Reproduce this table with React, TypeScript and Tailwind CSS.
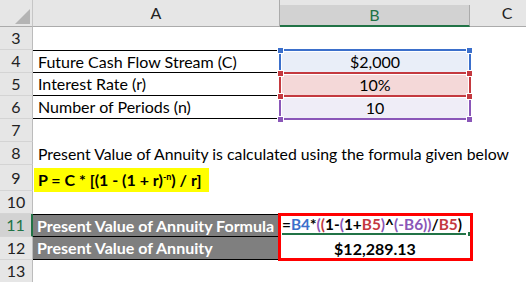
import React from "react";

const hdr = "bg-[#e6e6e6]";

function RowHead({ n, sel }: { n: number; sel?: boolean }) {
  return (
    <div
      className={`w-[33px] shrink-0 flex items-center justify-center border-b border-b-[#d4d4d4] ${
        sel
          ? "bg-[#d2d2d2] border-r-2 border-r-[#217346] text-[#217346]"
          : `${hdr} border-r border-r-[#bcbcbc] text-[#222]`
      }`}
    >
      {n}
    </div>
  );
}

function Handle({ pos, color }: { pos: string; color: string }) {
  return <div className={`absolute w-[7px] h-[7px] border border-white ${pos} ${color}`} />;
}

// coloured range box drawn over a B cell, like Excel's formula reference highlight
function RefBox({
  fill,
  line,
  dot,
  z,
  children,
}: {
  fill: string;
  line: string;
  dot: string;
  z: string;
  children: React.ReactNode;
}) {
  return (
    <div className="relative w-[190px] shrink-0 flex items-center justify-center">
      <div className={`absolute left-[2px] right-[2px] top-[2px] bottom-[1px] ${fill}`} />
      <div className={`absolute -left-[1px] -right-[1px] -top-[1px] -bottom-[1px] border-2 ${line} ${z}`} />
      <div className={`absolute inset-0 ${z}`}>
        <Handle pos="-left-[3px] -top-[3px]" color={dot} />
        <Handle pos="-right-[3px] -top-[3px]" color={dot} />
        <Handle pos="-left-[3px] -bottom-[4px]" color={dot} />
        <Handle pos="-right-[3px] -bottom-[4px]" color={dot} />
      </div>
      <span className="relative">{children}</span>
    </div>
  );
}

const blue = "text-[#3b6fcb]";
const red = "text-[#c4393f]";
const purple = "text-[#8a56b8]";

export default function App() {
  return (
    <div className="w-[526px] h-[282px] overflow-hidden bg-white text-black text-[16px] leading-none font-['Lato','Liberation_Sans',sans-serif]">
      {/* column headers */}
      <div className="flex h-[27px]">
        <div className={`w-[33px] shrink-0 relative ${hdr} border-r border-r-[#c6c6c6] border-b border-b-[#ababab]`}>
          <svg className="absolute left-[15px] top-[9px]" width="15" height="15" viewBox="0 0 15 15">
            <polygon points="15,0 15,15 0,15" fill="#b4b4b4" />
          </svg>
        </div>
        <div className={`w-[247px] shrink-0 flex items-center justify-center ${hdr} border-r border-r-[#ababab] border-b border-b-[#ababab] text-[#222]`}>
          A
        </div>
        <div className={`w-[190px] shrink-0 flex flex-col ${hdr}`}>
          <div className="mt-[5px] flex-1 flex items-center justify-center bg-[#d2d2d2] border-b-2 border-b-[#217346] border-r border-r-[#ababab] text-[#217346]">
            B
          </div>
        </div>
        <div className={`w-[74px] shrink-0 flex items-center justify-center ${hdr} border-b border-b-[#ababab] text-[#222]`}>
          C
        </div>
      </div>

      {/* row 3 */}
      <div className="flex h-[23px]">
        <RowHead n={3} />
      </div>

      {/* row 4 */}
      <div className="flex h-[23px]">
        <RowHead n={4} />
        <div className="w-[247px] shrink-0 flex items-center pl-[5px] border-y border-black">Future Cash Flow Stream (C)</div>
        <RefBox fill="bg-[#e9eef8]" line="border-[#3b6fcb]" dot="bg-[#3b6fcb]" z="z-10">
          $2,000
        </RefBox>
      </div>

      {/* row 5 */}
      <div className="flex h-[23px]">
        <RowHead n={5} />
        <div className="w-[247px] shrink-0 flex items-center pl-[5px] border-b border-black">Interest Rate (r)</div>
        <RefBox fill="bg-[#f4d8d8]" line="border-[#c4393f]" dot="bg-[#c4393f]" z="z-20">
          10%
        </RefBox>
      </div>

      {/* row 6 */}
      <div className="flex h-[23px]">
        <RowHead n={6} />
        <div className="w-[247px] shrink-0 flex items-center pl-[5px] border-b border-black">Number of Periods (n)</div>
        <RefBox fill="bg-[#efedf7]" line="border-[#8a56b8]" dot="bg-[#8a56b8]" z="z-10">
          10
        </RefBox>
      </div>

      {/* row 7 */}
      <div className="flex h-[23px]">
        <RowHead n={7} />
      </div>

      {/* row 8 */}
      <div className="flex h-[23px]">
        <RowHead n={8} />
        <div className="flex items-center pl-[5px] whitespace-nowrap text-[15.8px]">
          Present Value of Annuity is calculated using the formula given below
        </div>
      </div>

      {/* row 9 */}
      <div className="flex h-[26px]">
        <RowHead n={9} />
        <div className="w-[247px] shrink-0 pl-px pt-[3px]">
          <div className="w-[175px] h-[24px] bg-[#ffff00] flex items-center pl-[4px] font-bold whitespace-nowrap">
            <span>
              P = C * [(1 - (1 + r)
              <span className="relative -top-[6px] text-[9px]">-n</span>) / r]
            </span>
          </div>
        </div>
      </div>

      {/* row 10 */}
      <div className="flex h-[23px]">
        <RowHead n={10} />
      </div>

      {/* row 11 */}
      <div className="flex h-[23px]">
        <RowHead n={11} sel />
        <div className="w-[247px] shrink-0 flex items-center pl-[4px] bg-[#7f7f7f] border-y border-black text-white font-bold whitespace-nowrap overflow-hidden">
          Present Value of Annuity Formula
        </div>
        <div className="relative w-[190px] shrink-0 flex items-center pl-[2px] pb-[2px] font-bold whitespace-nowrap text-[15.4px]">
          <div className="absolute -left-[2px] -top-[1px] w-[195px] h-[48px] border-[3px] border-[#ff0000] z-20" />
          <div className="absolute left-[2px] right-[4px] bottom-[2px] h-[2px] bg-[#217346]" />
          <div className="absolute -right-[1px] bottom-[1px] w-[3px] h-[4px] bg-[#217346]" />
          <span className="relative">
            =<span className={blue}>B4</span>*<span className={purple}>(</span>
            <span className={red}>(</span>1-<span className={purple}>(</span>1+<span className={red}>B5</span>
            <span className={purple}>)</span>^<span className={purple}>(</span>
            <span className={purple}>-B6</span>
            <span className={purple}>))</span>/<span className={red}>B5</span>)
          </span>
        </div>
      </div>

      {/* row 12 */}
      <div className="flex h-[23px]">
        <RowHead n={12} />
        <div className="w-[247px] shrink-0 flex items-center pl-[4px] bg-[#7f7f7f] border-b border-black text-white font-bold">
          Present Value of Annuity
        </div>
        <div className="w-[190px] shrink-0 flex items-center justify-center font-bold">$12,289.13</div>
      </div>

      {/* row 13 */}
      <div className="flex h-[23px]">
        <RowHead n={13} />
      </div>
    </div>
  );
}
